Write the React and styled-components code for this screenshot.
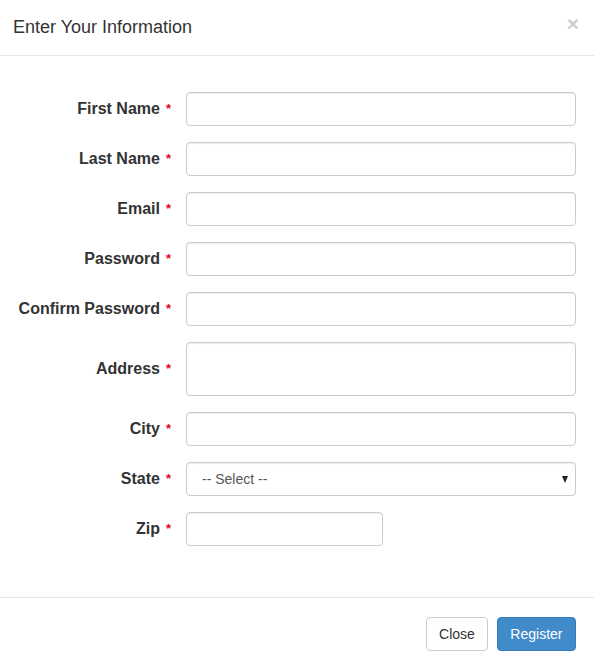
import React from 'react'
import styled, { createGlobalStyle } from 'styled-components'

const GlobalStyle = createGlobalStyle`
    html, body {
        margin: 0;
        padding: 0;
        background: #fff;
    }
    body {
        font-family: "Liberation Sans", Arial, sans-serif;
        font-size: 14px;
        color: #333;
    }
    * {
        box-sizing: border-box;
    }
`

const Modal = styled.div`
    width: 594px;
    height: 669px;
    background: #fff;
    display: flex;
    flex-direction: column;
`

const Header = styled.div`
    height: 56px;
    padding: 0 15px 2px 13px;
    display: flex;
    align-items: center;
    justify-content: space-between;
    border-bottom: 1px solid #e5e5e5;
    flex-shrink: 0;
`

const Title = styled.h4`
    margin: 0;
    font-size: 18px;
    font-weight: normal;
    color: #333;
    line-height: 1;
`

const CloseX = styled.button`
    border: 0;
    background: none;
    padding: 0;
    margin-top: -6px;
    font-family: "Liberation Sans", Arial, sans-serif;
    font-size: 21px;
    font-weight: bold;
    line-height: 1;
    color: #000;
    opacity: 0.2;
    cursor: pointer;
`

const Body = styled.form`
    padding: 36px 18px 51px 0;
    display: flex;
    flex-direction: column;
    gap: 16px;
`

const Row = styled.div`
    display: grid;
    grid-template-columns: 171px 1fr;
    column-gap: 15px;
    align-items: center;
`

const Label = styled.label`
    text-align: right;
    font-size: 16px;
    font-weight: bold;
    color: #333;
    white-space: nowrap;
`

const Req = styled.span`
    color: #e4002b;
    font-size: 13px;
    margin-left: 6px;
    position: relative;
    top: -1px;
`

const fieldCss = `
    display: block;
    height: 34px;
    padding: 6px 12px;
    font-family: "Liberation Sans", Arial, sans-serif;
    font-size: 14px;
    color: #555;
    background: #fff;
    border: 1px solid #ccc;
    border-radius: 4px;
    box-shadow: inset 0 1px 1px rgba(0, 0, 0, 0.075);
    outline: none;
`

const Input = styled.input`
    ${fieldCss}
    width: ${props => props.$narrow ? '197px' : '100%'};
`

const TextArea = styled.textarea`
    ${fieldCss}
    width: 100%;
    height: 54px;
    resize: none;
`

const SelectWrap = styled.div`
    position: relative;
    width: 100%;
`

const Select = styled.select`
    ${fieldCss}
    width: 100%;
    padding-left: 15px;
    appearance: none;
    -webkit-appearance: none;
`

const Caret = styled.span`
    position: absolute;
    right: 8px;
    top: 14px;
    width: 0;
    height: 0;
    border-left: 3px solid transparent;
    border-right: 3px solid transparent;
    border-top: 7px solid #222;
    pointer-events: none;
`

const Footer = styled.div`
    border-top: 1px solid #e5e5e5;
    padding: 19px 18px 15px;
    display: flex;
    justify-content: flex-end;
    gap: 9px;
`

const Button = styled.button`
    height: 34px;
    padding: 6px ${props => props.$primary ? '12.5px' : '12px'};
    font-family: "Liberation Sans", Arial, sans-serif;
    font-size: 14px;
    line-height: 20px;
    border-radius: 4px;
    border: 1px solid ${props => props.$primary ? '#357ebd' : '#ccc'};
    background: ${props => props.$primary ? '#428bca' : '#fff'};
    color: ${props => props.$primary ? '#fff' : '#333'};
    cursor: pointer;
`

const fields = [
    { label: 'First Name' },
    { label: 'Last Name' },
    { label: 'Email', type: 'email' },
    { label: 'Password', type: 'password' },
    { label: 'Confirm Password', type: 'password' },
    { label: 'Address', kind: 'textarea' },
    { label: 'City' },
    { label: 'State', kind: 'select' },
    { label: 'Zip', narrow: true },
]

function Field({ field }) {
    if (field.kind === 'textarea') return <TextArea />
    if (field.kind === 'select') {
        return (
            <SelectWrap>
                <Select defaultValue="">
                    <option value="">-- Select --</option>
                </Select>
                <Caret />
            </SelectWrap>
        )
    }
    return <Input type={field.type || 'text'} $narrow={field.narrow} />
}

export default function App() {
    return (
        <>
            <GlobalStyle />
            <Modal>
                <Header>
                    <Title>Enter Your Information</Title>
                    <CloseX type="button">×</CloseX>
                </Header>
                <Body onSubmit={e => e.preventDefault()}>
                    {fields.map(f => (
                        <Row key={f.label}>
                            <Label>
                                {f.label}<Req>*</Req>
                            </Label>
                            <Field field={f} />
                        </Row>
                    ))}
                </Body>
                <Footer>
                    <Button type="button">Close</Button>
                    <Button type="button" $primary>Register</Button>
                </Footer>
            </Modal>
        </>
    )
}
